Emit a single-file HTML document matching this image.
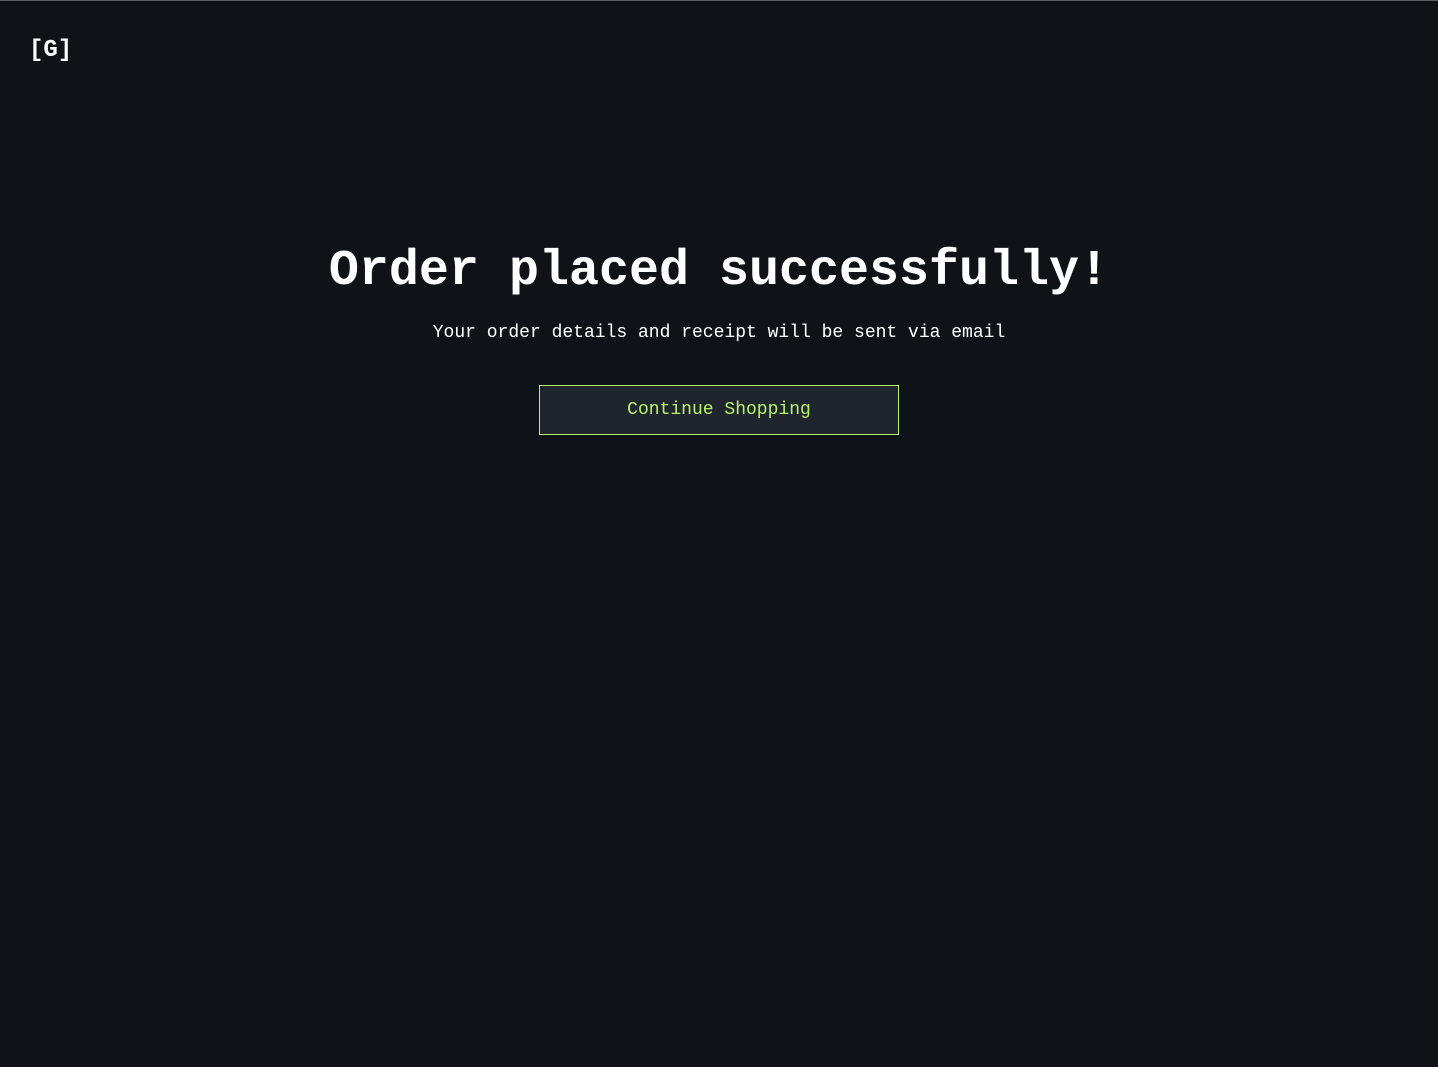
<!DOCTYPE html>
<html><head><meta charset="utf-8"><style>
html,body{margin:0;padding:0}
body{width:1438px;height:1067px;background:#0f1217;border-top:1px solid #5a5e63;box-sizing:border-box;position:relative;overflow:hidden;font-family:"Liberation Mono",monospace;color:#fff}
.logo{position:absolute;left:29px;top:35px;font-size:24px;font-weight:bold;line-height:30px}
h1{position:absolute;left:0;width:1438px;top:241px;margin:0;text-align:center;font-size:50px;font-weight:bold;line-height:60px}
p{position:absolute;left:0;width:1438px;top:319px;margin:0;text-align:center;font-size:18px;line-height:26px}
.btn{position:absolute;left:539px;top:384px;width:358px;height:48px;border:1px solid #b9f16a;background:#1f252d;color:#b9f16a;font-size:18px;line-height:49px;text-align:center}
</style></head><body>
<div class="logo">[G]</div>
<h1>Order placed successfully!</h1>
<p>Your order details and receipt will be sent via email</p>
<div class="btn">Continue Shopping</div>
</body></html>
